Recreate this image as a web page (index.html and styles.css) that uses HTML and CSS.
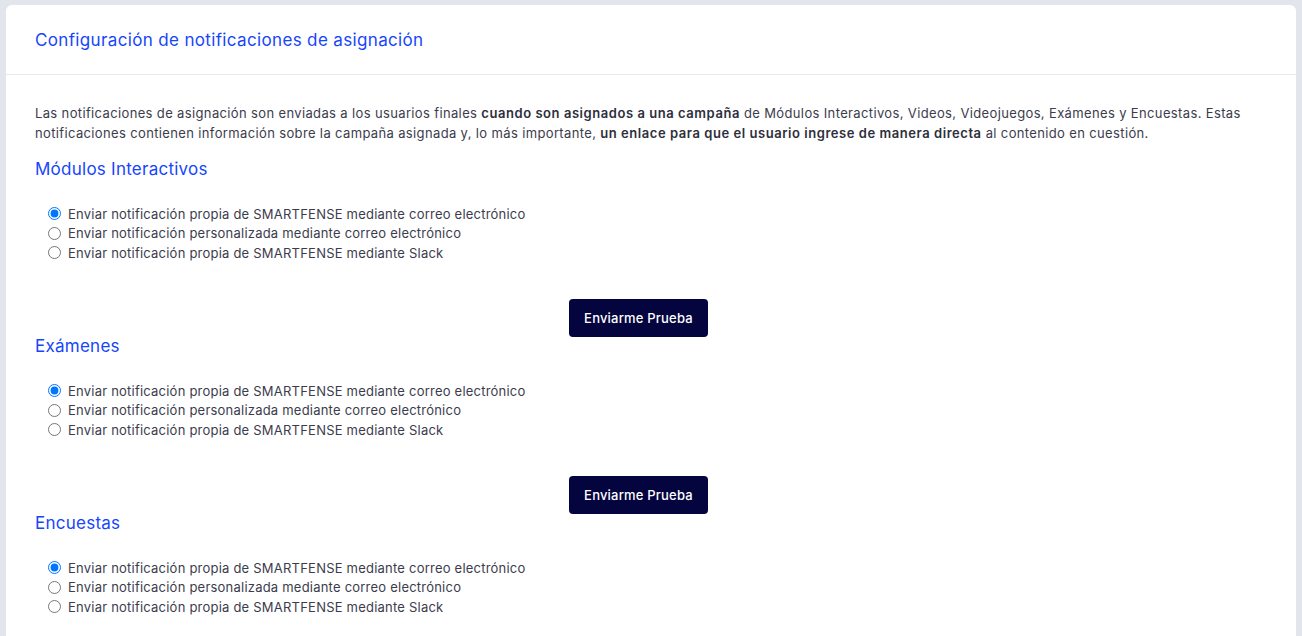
FILE: index.html
```html
<!DOCTYPE html>
<html lang="es">
<head>
<meta charset="utf-8">
<title>Configuración de notificaciones de asignación</title>
<link rel="stylesheet" href="styles.css">
</head>
<body>
<div class="card">
  <div class="card-header">
    <h2 class="card-title">Configuración de notificaciones de asignación</h2>
  </div>
  <div class="card-body">
    <p class="intro">Las notificaciones de asignación son enviadas a los usuarios finales <strong>cuando son asignados a una campaña</strong> de Módulos Interactivos, Videos, Videojuegos, Exámenes y Encuestas. Estas notificaciones contienen información sobre la campaña asignada y, lo más importante, <strong>un enlace para que el usuario ingrese de manera directa</strong> al contenido en cuestión.</p>

    <section class="section">
      <h3 class="section-title">Módulos Interactivos</h3>
      <div class="options">
        <label class="option"><input type="radio" name="mod" checked><span>Enviar notificación propia de SMARTFENSE mediante correo electrónico</span></label>
        <label class="option"><input type="radio" name="mod"><span>Enviar notificación personalizada mediante correo electrónico</span></label>
        <label class="option"><input type="radio" name="mod"><span>Enviar notificación propia de SMARTFENSE mediante Slack</span></label>
      </div>
      <div class="actions"><button class="btn">Enviarme Prueba</button></div>
    </section>

    <section class="section">
      <h3 class="section-title">Exámenes</h3>
      <div class="options">
        <label class="option"><input type="radio" name="exa" checked><span>Enviar notificación propia de SMARTFENSE mediante correo electrónico</span></label>
        <label class="option"><input type="radio" name="exa"><span>Enviar notificación personalizada mediante correo electrónico</span></label>
        <label class="option"><input type="radio" name="exa"><span>Enviar notificación propia de SMARTFENSE mediante Slack</span></label>
      </div>
      <div class="actions"><button class="btn">Enviarme Prueba</button></div>
    </section>

    <section class="section">
      <h3 class="section-title">Encuestas</h3>
      <div class="options">
        <label class="option"><input type="radio" name="enc" checked><span>Enviar notificación propia de SMARTFENSE mediante correo electrónico</span></label>
        <label class="option"><input type="radio" name="enc"><span>Enviar notificación personalizada mediante correo electrónico</span></label>
        <label class="option"><input type="radio" name="enc"><span>Enviar notificación propia de SMARTFENSE mediante Slack</span></label>
      </div>
    </section>
  </div>
</div>
</body>
</html>
```
FILE: styles.css
```css
html, body {
  margin: 0;
  padding: 0;
  background: #e3e5ed;
  height: 100%;
  overflow: hidden;
}
body {
  font-family: "Inter", "Liberation Sans", sans-serif;
  color: #3c3c4c;
  padding: 5px 6px 0;
  box-sizing: border-box;
}
.card {
  background: #ffffff;
  border-radius: 6px 6px 0 0;
  height: 100%;
}
.card-header {
  height: 69px;
  display: flex;
  align-items: center;
  padding: 0 29px;
  border-bottom: 1px solid #e8e9ee;
}
.card-title {
  margin: 0;
  font-size: 17px;
  font-weight: 400;
  letter-spacing: 0.35px;
  color: #1646fb;
  line-height: 24px;
}
.card-body {
  padding: 28px 29px 0;
}
.intro {
  margin: 0;
  font-size: 13px;
  line-height: 20px;
  letter-spacing: 0.36px;
}
.intro strong {
  font-weight: 600;
  color: #2e2e3c;
  letter-spacing: 0.55px;
}
.section-title {
  margin: 16px 0 0;
  font-size: 17px;
  font-weight: 400;
  letter-spacing: 0.25px;
  line-height: 20px;
  color: #1646fb;
}
.section + .section .section-title {
  margin-top: -1px;
}
.options {
  margin-top: 25px;
  padding-left: 13px;
  display: flex;
  flex-direction: column;
}
.option {
  display: flex;
  align-items: center;
  height: 19.5px;
  font-size: 13px;
  letter-spacing: 0.22px;
}
.option input {
  margin: 0 7px 0 0;
  width: 13px;
  height: 13px;
}
.actions {
  margin-top: 36.5px;
  display: flex;
  justify-content: center;
  padding-right: 25px;
}
.btn {
  width: 139px;
  height: 38px;
  background: #04043f;
  color: #ffffff;
  border: 0;
  border-radius: 4px;
  font-family: "Inter", "Liberation Sans", sans-serif;
  font-size: 13px;
  letter-spacing: 0.2px;
  font-weight: 500;
  cursor: pointer;
}
```
